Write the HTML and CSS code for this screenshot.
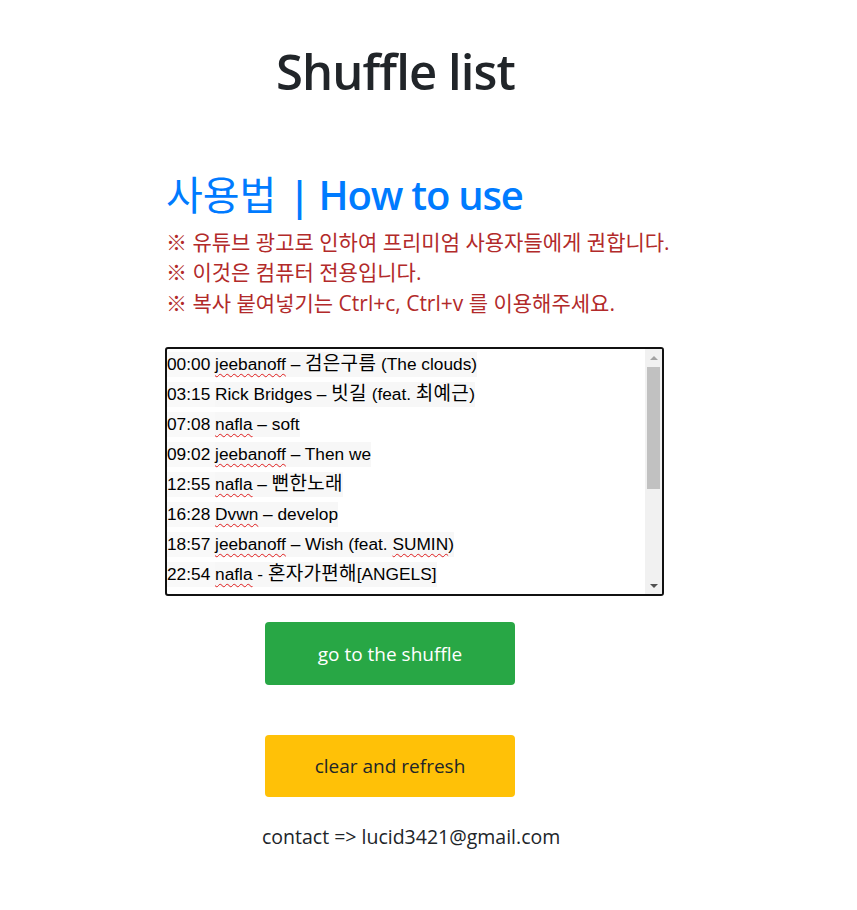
FILE: index.html
```html
<!DOCTYPE html>
<html lang="ko">
<head>
<meta charset="utf-8">
<title>Shuffle list</title>
<link rel="stylesheet" href="styles.css">
</head>
<body>
<main class="page">
  <h1 class="title">Shuffle list</h1>
  <section class="guide">
    <h2 class="how"><span class="ko">사용법</span> | How to use</h2>
    <p class="note">※ 유튜브 광고로 인하여 프리미엄 사용자들에게 권합니다.</p>
    <p class="note">※ 이것은 컴퓨터 전용입니다.</p>
    <p class="note">※ 복사 붙여넣기는 Ctrl+c, Ctrl+v 를 이용해주세요.</p>
  </section>
  <div class="listbox">
    <div class="list-content">
      <div class="line"><span class="seg t">00:00&nbsp;</span><span class="seg"><span class="sp">jeebanoff</span> – <span class="k">검은구름</span> (The clouds)</span></div>
      <div class="line"><span class="seg t">03:15&nbsp;</span><span class="seg">Rick Bridges – <span class="k">빗길</span> (feat. <span class="k">최예근</span>)</span></div>
      <div class="line"><span class="seg t">07:08&nbsp;</span><span class="seg"><span class="sp">nafla</span> – soft</span></div>
      <div class="line"><span class="seg t">09:02&nbsp;</span><span class="seg"><span class="sp">jeebanoff</span> – Then we</span></div>
      <div class="line"><span class="seg t">12:55&nbsp;</span><span class="seg"><span class="sp">nafla</span> – <span class="k">뻔한노래</span></span></div>
      <div class="line"><span class="seg t">16:28&nbsp;</span><span class="seg"><span class="sp">Dvwn</span> – develop</span></div>
      <div class="line"><span class="seg t">18:57&nbsp;</span><span class="seg"><span class="sp">jeebanoff</span> – Wish (feat. <span class="sp">SUMIN</span>)</span></div>
      <div class="line"><span class="seg t">22:54&nbsp;</span><span class="seg"><span class="sp">nafla</span> - <span class="k">혼자가편해</span>[ANGELS]</span></div>
    </div>
    <div class="scrollbar">
      <div class="btn"><span class="arrow up"></span></div>
      <div class="track"><div class="thumb"></div></div>
      <div class="btn"><span class="arrow down"></span></div>
    </div>
  </div>
  <div class="actions">
    <button class="button green" type="button">go to the shuffle</button>
    <button class="button yellow" type="button">clear and refresh</button>
  </div>
  <p class="contact">contact =&gt; lucid3421@gmail.com</p>
</main>
</body>
</html>
```
FILE: styles.css
```css
* { box-sizing: border-box; }
html, body { margin: 0; padding: 0; background: #fff; }
body {
  font-family: "Open Sans", "Noto Sans CJK KR", sans-serif;
  color: #212529;
}
.page {
  display: flex;
  flex-direction: column;
  padding-top: 42px;
}
.title {
  margin: 0 0 0 276px;
  font-size: 49px;
  font-weight: 600;
  line-height: 1.2;
  color: #212529;
  letter-spacing: -0.9px;
}
.guide {
  margin: 70px 0 0 166px;
}
.how {
  margin: 0;
  font-size: 40px;
  font-weight: 600;
  line-height: 1.2;
  color: #007bff;
  letter-spacing: -1.2px;
}
.how .ko {
  font-weight: 400;
  letter-spacing: 0;
  margin-right: 3px;
}
.note {
  margin: 0;
  font-size: 21px;
  line-height: 30.5px;
  color: #b22a2a;
}
.guide .how + .note { margin-top: 8px; }
.listbox {
  margin: 29px 0 0 165px;
  width: 499px;
  height: 249px;
  border: 2px solid #111;
  border-radius: 3px;
  display: flex;
  overflow: hidden;
  background: #fff;
}
.list-content {
  flex: 1;
  overflow: hidden;
  font-family: "Liberation Sans", "Noto Sans CJK KR", sans-serif;
  font-size: 17.3px;
  color: #000;
}
.line {
  height: 30px;
  padding-top: 3px;
  white-space: nowrap;
}
.seg {
  display: inline-block;
  line-height: 25px;
  background: #f7f7f7;
}
.seg.t { background: #f9f9f9; }
.k {
  font-size: 19px;
  line-height: 1;
  letter-spacing: 0.3px;
}
.sp {
  text-decoration: underline wavy #e01b1b;
  text-decoration-thickness: 1px;
  text-underline-offset: 3px;
}
.scrollbar {
  width: 17px;
  flex: 0 0 17px;
  background: #f1f1f1;
  display: flex;
  flex-direction: column;
}
.btn {
  height: 17px;
  display: flex;
  align-items: center;
  justify-content: center;
}
.arrow {
  width: 0;
  height: 0;
  border-left: 4px solid transparent;
  border-right: 4px solid transparent;
}
.arrow.up { border-bottom: 4px solid #a3a3a3; }
.arrow.down { border-top: 4px solid #505050; }
.track {
  flex: 1;
  padding: 1px 2px 0 2px;
}
.thumb {
  height: 122px;
  background: #c1c1c1;
}
.actions {
  display: flex;
  flex-direction: column;
  gap: 50px;
  margin: 26px 0 0 265px;
}
.button {
  width: 250px;
  border: none;
  border-radius: 4px;
  font-family: "Open Sans", "Noto Sans CJK KR", sans-serif;
  font-size: 19px;
  padding: 0;
  cursor: pointer;
}
.green {
  height: 63px;
  background: #28a745;
  color: #fff;
}
.yellow {
  height: 62px;
  background: #ffc107;
  color: #212529;
}
.contact {
  margin: 26px 0 0 262px;
  font-size: 19.5px;
  line-height: 28px;
  color: #212529;
}
```
